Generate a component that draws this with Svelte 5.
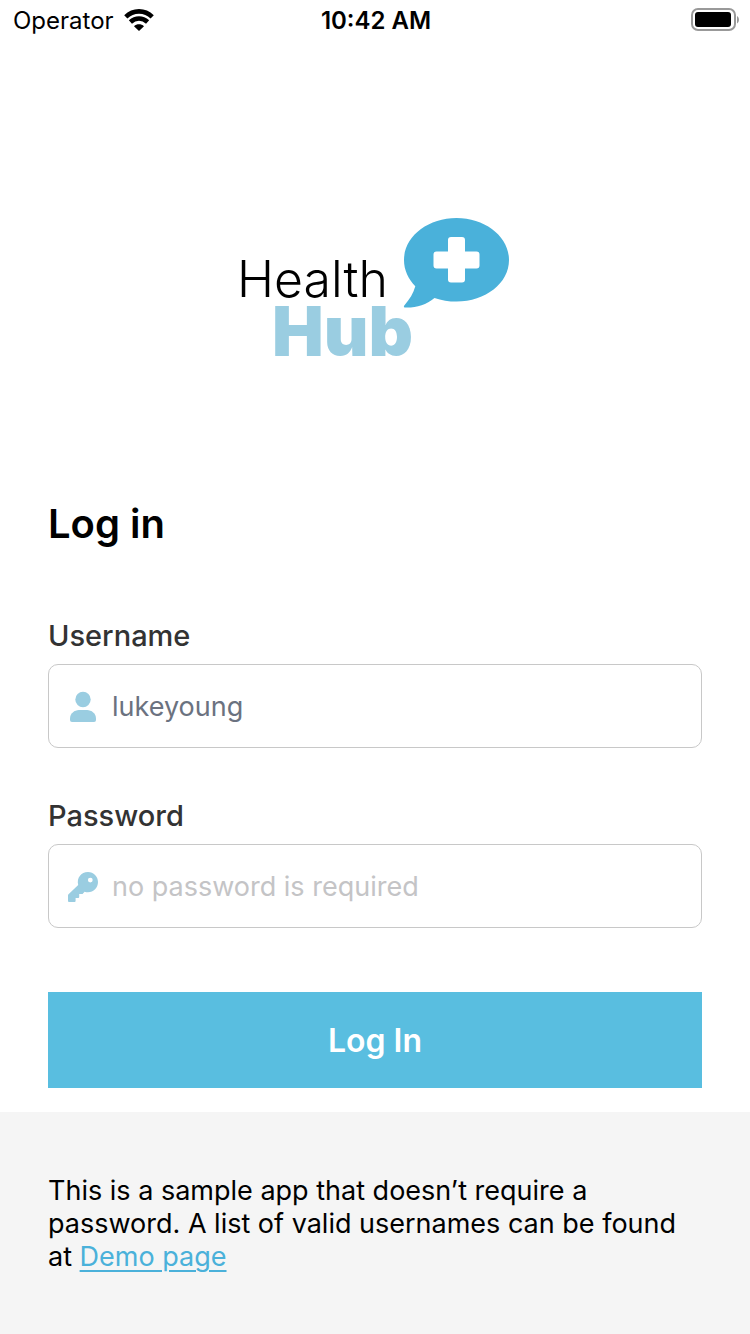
<script>
  let username = $state('lukeyoung');
  let password = $state('');

  function submit(event) {
    event.preventDefault();
  }
</script>

<div class="screen">
  <header class="status">
    <div class="carrier">
      <span>Operator</span>
      <svg width="30" height="22" viewBox="0 0 30 22" aria-hidden="true">
        <g fill="none" stroke="#000" stroke-width="4.600">
          <path d="M1.800 7.800C9.200.6 20.800.6 28.200 7.800" />
          <path d="M6.400 13C11.500 8.300 18.500 8.300 23.600 13" />
        </g>
        <path d="M15 22l-5-4.800c2.800-2.500 7.200-2.500 10 0z" />
      </svg>
    </div>
    <time>10:42 AM</time>
    <svg class="battery" width="48" height="24" viewBox="0 0 48 24" aria-hidden="true">
      <rect x="1" y="1" width="43" height="21" rx="6" fill="none" stroke="#999" stroke-width="2" />
      <rect x="4" y="4" width="36" height="15" rx="3" />
      <path d="M46 8c2.600 1.500 2.600 6 0 7.500z" fill="#999" />
    </svg>
  </header>

  <main>
    <svg class="logo" width="274" height="142" viewBox="0 0 274 142" role="img" aria-label="Health Hub">
      <text class="health" x="-1" y="80">Health</text>
      <text class="hub" x="34" y="139">Hub</text>
      <path
        d="M218.500 1C189.500 1 166 19.800 166 43c0 10.200 4.400 19 11.300 26.200-1.800 7-5.700 13-11 19.300-.8 1-.4 2 .8 2 11 .4 21-2.700 29.400-9.600 6.800 2.500 14.400 3.600 22 3.600 29 0 52.500-18.300 52.500-41.500S247.500 1 218.500 1z"
        fill="#4ab1da"
      />
      <path
        d="M213 20h11q3 0 3 3v11.500h11.500q3 0 3 3v11q0 3-3 3H227V62.500q0 3-3 3h-11q-3 0-3-3V51.500h-11.500q-3 0-3-3v-11q0-3 3-3H210V23q0-3 3-3z"
        fill="#fff"
      />
    </svg>

    <h1>Log in</h1>

    <form onsubmit={submit}>
      <label for="username">Username</label>
      <div class="field">
        <svg width="30" height="32" viewBox="0 0 30 32" aria-hidden="true">
          <circle cx="15" cy="8.500" r="7.700" />
          <path d="M2 29v-1.500C2 22.500 6.500 19 11 19h8c4.500 0 9 3.500 9 8.500V29q0 2-2 2H4q-2 0-2-2z" />
        </svg>
        <input id="username" type="text" bind:value={username} autocomplete="username" />
      </div>

      <label for="password">Password</label>
      <div class="field">
        <svg width="30" height="32" viewBox="0 0 30 32" aria-hidden="true">
          <path
            fill-rule="evenodd"
            d="M20 1c5.600 0 10 4.400 10 10.100S25.600 21.300 20 21.300c-1.200 0-2.300-.1-3.400-.5L15 22.500q-.3.600-1 .6H11.200V26q0 .9-.9.900H7.600V30q0 1-1 1H1Q0 31 0 30V24.600q0-.8.500-1.300L10.200 14C8.500 7 13 1 20 1zm2.300 5.700a2.400 2.400 0 1 0 .01 4.800 2.400 2.400 0 0 0-.01-4.800z"
          />
        </svg>
        <input
          id="password"
          type="password"
          bind:value={password}
          placeholder="no password is required"
          autocomplete="current-password"
        />
      </div>

      <button type="submit">Log In</button>
    </form>
  </main>

  <footer>
    <p>
      This is a sample app that doesn’t require a password. A list of valid usernames can be found at
      <a href="#demo">Demo page</a>
    </p>
  </footer>
</div>

<style>
  .screen {
    min-height: 100vh;
    display: flex;
    flex-direction: column;
    background: #fff;
    color: #000;
    font-family: Inter, 'Liberation Sans', sans-serif;
  }

  .status {
    display: grid;
    grid-template-columns: 1fr auto 1fr;
    align-items: center;
    height: 40px;
    padding: 0 11px 0 13px;
    font-size: 24px;
  }

  .carrier {
    display: flex;
    align-items: center;
    gap: 10px;
  }

  time {
    font-weight: 600;
  }

  .battery {
    justify-self: end;
  }

  main {
    display: flex;
    flex-direction: column;
    padding: 177px 48px 24px;
  }

  .logo {
    align-self: center;
    overflow: visible;
  }

  .health {
    font-size: 50px;
    font-weight: 300;
  }

  .hub {
    font-size: 69px;
    font-weight: 900;
    fill: #9acde1;
  }

  h1 {
    margin: 141px 0 0;
    font-size: 40px;
    line-height: 48px;
    font-weight: 600;
  }

  form {
    display: flex;
    flex-direction: column;
    padding-top: 66px;
  }

  label {
    margin-bottom: 6px;
    font-size: 29px;
    line-height: 44px;
    font-weight: 500;
    color: #333;
  }

  .field {
    display: flex;
    align-items: center;
    gap: 14px;
    height: 84px;
    margin-bottom: 46px;
    padding: 2px 19px 0;
    box-sizing: border-box;
    border: 1px solid #c8c8c8;
    border-radius: 10px;
  }

  .field svg {
    flex: none;
    fill: #9acde1;
  }

  input {
    flex: 1;
    min-width: 0;
    padding: 0;
    border: 0;
    outline: 0;
    background: none;
    font: inherit;
    font-size: 27px;
    line-height: 40px;
    color: #6b7280;
  }

  input::placeholder {
    color: #c4c4c6;
    opacity: 1;
  }

  button {
    height: 96px;
    margin-top: 18px;
    border: 0;
    background: #59bee0;
    color: #fff;
    font: inherit;
    font-size: 32px;
    font-weight: 600;
  }

  footer {
    flex: 1;
    padding: 62px 48px;
    background: #f5f5f5;
  }

  p {
    margin: 0;
    font-size: 27px;
    line-height: 33px;
  }

  a {
    color: #4ab1da;
    text-decoration-thickness: 2px;
    text-underline-offset: 4px;
  }
</style>
